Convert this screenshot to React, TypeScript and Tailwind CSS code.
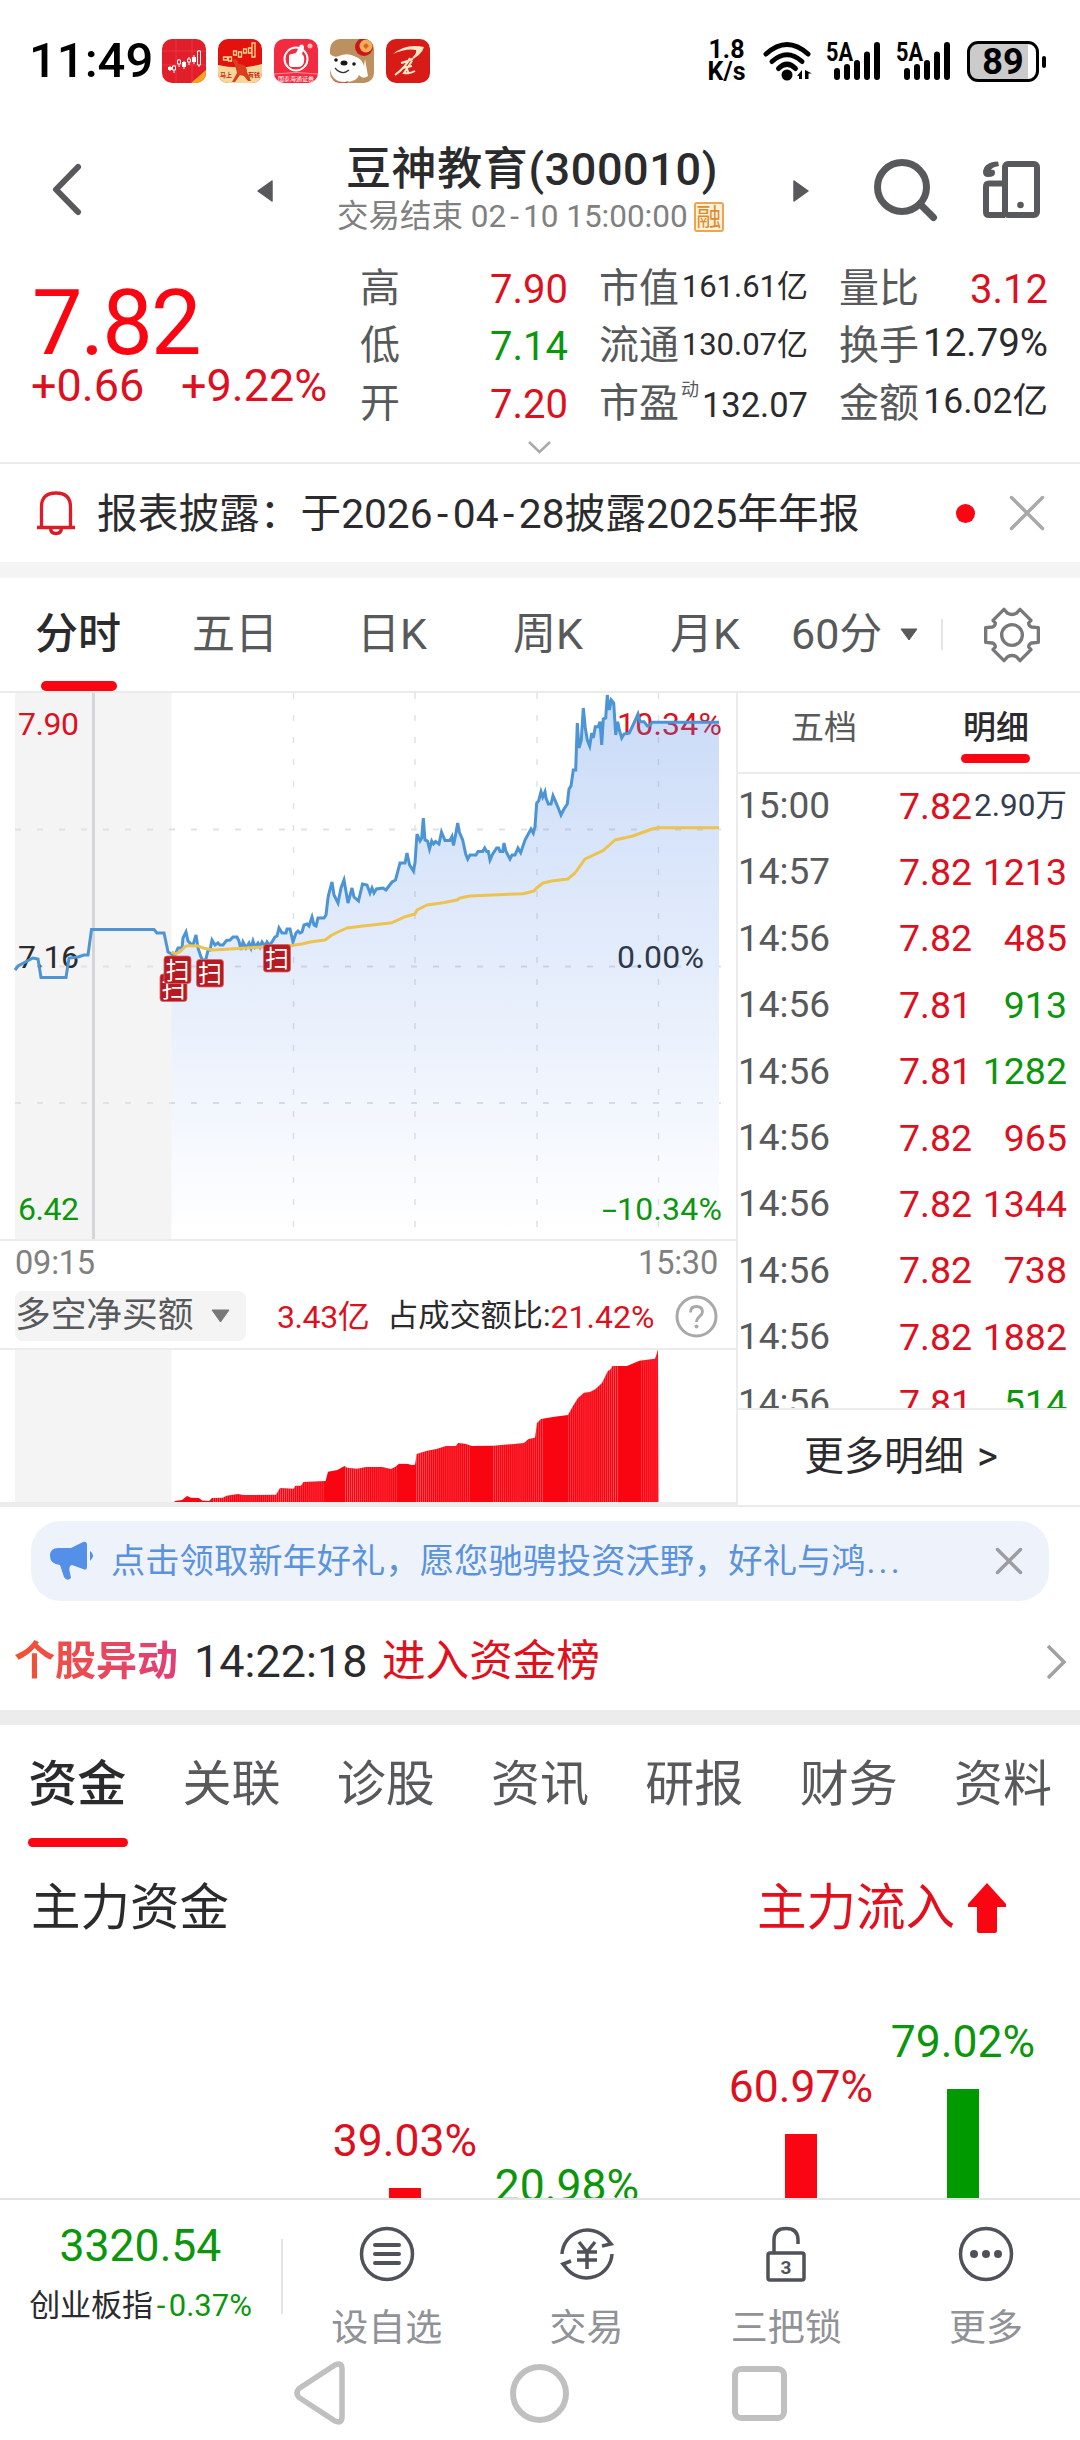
import { useState } from 'react'
import type { ReactNode } from 'react'
import clsx from 'clsx'

const RED = 'text-[#dc101e]'
const GREEN = 'text-[#0c960c]'

const trades = [
  { time: '15:00', price: '7.82', volume: '2.90万', side: 'none' },
  { time: '14:57', price: '7.82', volume: '1213', side: 'buy' },
  { time: '14:56', price: '7.82', volume: '485', side: 'buy' },
  { time: '14:56', price: '7.81', volume: '913', side: 'sell' },
  { time: '14:56', price: '7.81', volume: '1282', side: 'sell' },
  { time: '14:56', price: '7.82', volume: '965', side: 'buy' },
  { time: '14:56', price: '7.82', volume: '1344', side: 'buy' },
  { time: '14:56', price: '7.82', volume: '738', side: 'buy' },
  { time: '14:56', price: '7.82', volume: '1882', side: 'buy' },
  { time: '14:56', price: '7.81', volume: '514', side: 'sell' },
]

const PRE_MARKET = '15,970 18,966 33,958 38,959 41,977.5 66,977.5 69,958 78,957 84,955 88,955 91.5,929.5 154,929.5 157,933 164,933 167,947 168,952 171.5,954'

const PRICE =
  '171.5,954 174,957 178,948 182,948 183,938 186,932 188,941 191,944 193,945 196,935 198,948 201,957 203,961 206,959 208,950 210,950 212,940 215,945 218,943 220,945 223,945 226.5,940.5 230,940 233,937 237,937 239,941 241,950 243,942 246,948 249,943 251,948 253,941 255,947 258,943 260,947 262,942 265,946 267,942 269,945 272,942 275,937 277,936 279,928 282,933 286,933 287,929 290,929 293,942 296,933 298,931 300,933 302,932 304,925 307,924 309,926 312,917 314,925 316,926 318,918 324,918 326,915 328,898 329,893 332,882 334,895 338,903 341,888 344,880 348,903 352,888 354,897 358.5,901 362.5,884 367,885 370,893 372,888 374,893 376.5,889 383,888 386,890 392,882 395.5,880 400,863 405,863 407,853 409.6,865 413.4,871 415,863 417,834 420,841 421.7,838 423.3,818 425,840 427.5,841 429.5,849 431.7,841 433.5,844 435.5,841.5 439,844 441.5,832 445,840.5 450,840.5 452,836.5 453.5,845.5 455.3,836.5 457.7,823 459.3,832 462.7,840 465.7,854 467.7,859 470,855 476,855 478,851.5 482.7,851.5 484.7,848 486.7,851.5 488.3,851.5 490,860 492.7,854 496.7,848 498.7,848 500,851.5 502.7,851.5 504,843 506,851.5 510,859 512,855 515,855 518,848 520.7,852.7 525,840 531,829 533.3,833 535,826.7 536.7,803 538.7,800.7 541,791.7 542.7,797 545,791.7 546,798 548.3,804 551,804 553,795.7 556,802.7 558.3,808 561,815 564,809 567.3,804 569,789 571,786 573.3,770 575.7,770 577.3,723 579,748 581.3,740 583.3,708 585.3,728 587.3,740 589.7,746 591.7,733 593.3,738 595.3,726.7 598.3,726.7 600,721.7 601.7,745 603.3,719 605.7,718 607.3,695 609.3,710 611.3,700 613.7,703 615.7,735 617.7,721.7 619.3,730 621.7,738 624,734 629.3,733 634,723 638,714 640,721.7 644,721.7 647.3,726 650,725 652,722.3 719,722.3'

const AVERAGE =
  '171.7,951.7 175,954 180,951.7 185,946.7 188,945.7 198,946 203,948 213,950 230,949 250,947.7 293,945.3 302,944 310,942 325,940 332,935 338,932 347,928 363,926 392,922.7 398,920 405,916.7 415,914 417,910 427,905 443,902.7 457,900 460,898 470,896 523,893.7 534,891 536.7,888 543,883 551.7,881 567.7,879 575,873 585,859 603,850.7 615,840 633,836 652,829 658,827.7 719,827.7'

const NET_BUY =
  '174.6,1501 182,1500 187,1496 191,1497.7 199,1498 202,1500.5 209,1501 212,1498 223,1497.7 226.5,1495.7 238,1494 243,1495 276,1494.7 280,1488 293.5,1488.7 295.5,1485.7 301,1485.7 303.5,1482 325.6,1481 328,1471.7 337.4,1470 344.5,1466 347,1467.7 357,1468.7 366,1467 382,1467 391,1469 395.5,1466.7 399,1463.7 408,1464 411.5,1465 415,1464.7 416.7,1454 427,1450.7 436.5,1449 446,1446 456,1446 458,1443 465,1443.7 472,1446 493,1445.7 514,1444 524,1443 528.5,1439 535,1437.7 537,1423 541,1419 554.5,1416.7 568,1415 573,1406 578,1398 584,1392.7 590,1392 595.6,1389 602,1383 608,1370.7 610,1370 612.5,1366 627,1366 639.5,1360.7 655,1358.7 657,1353 658,1349 658.5,1502 174.6,1502'

const markers = [
  { x: 160, y: 974 },
  { x: 164, y: 956 },
  { x: 196.5, y: 959.5 },
  { x: 263.5, y: 944.5 },
]

function AppIcons() {
  return (
    <div className="ml-[14px] flex gap-[12px]">
      <svg className="h-[44px] w-[44px] rounded-[10px]" viewBox="0 0 44 44">
        <rect width="44" height="44" fill="#e11f2b" />
        <path d="M0 12H44M0 26H44M14 0V44M30 0V44" stroke="#ee4450" strokeWidth=".6" />
        <path d="M29 44 44 31V44Z" fill="#f5a21d" />
        <path d="M8 27v5M12 26v8M17 20v8M22 22v8M27 18v8M32 16v9M37 11v17" stroke="#fff" strokeWidth="1" />
        <path d="M6 28h4v3H6zM20 23h4v5h-4zM30 18h4v5h-4z" fill="#fff" />
        <path d="M10.500 27h3v4h-3zM15.500 21h3v4h-3zM25.500 20h3v3h-3zM35.500 12h3v14h-3z" fill="#e11f2b" stroke="#fff" strokeWidth="1" />
      </svg>
      <svg className="h-[44px] w-[44px] rounded-[10px]" viewBox="0 0 44 44">
        <rect width="44" height="44" fill="#e3120f" />
        <path d="M0 26Q22 31 44 25V44H0Z" fill="#f6d79a" />
        <path d="M5.500 18h4v3h-4zM10.500 18h3v4h-3zM15.500 12h3v4h-3zM20.500 13h3v5h-3zM25.500 10h3v4h-3zM30.500 9h3v5h-3zM34 4h3v14h-3z" fill="none" stroke="#fbd58a" strokeWidth="1.300" />
        <path d="M14 21 18 20 21 25Q29 25 29 33L33 42H30L26 37 22 36 17 43H14L19 34 17 26Z" fill="#d8401d" />
        <text x="2" y="38" fontSize="6" fontWeight="700" fill="#c3281b">马上</text>
        <text x="30" y="38" fontSize="6" fontWeight="700" fill="#c3281b">有钱</text>
      </svg>
      <svg className="h-[44px] w-[44px] rounded-[10px]" viewBox="0 0 44 44">
        <rect width="44" height="44" fill="#f32b40" />
        <circle cx="22" cy="20" r="11.500" fill="none" stroke="#fff" strokeWidth="2" />
        <path d="M15 17Q15 15 18 15L22 14 26 6Q30 4 30 9L28 15Q31 17 30 23 29 28 24 28H18Q15 28 15 25Z" fill="#fff" />
        <circle cx="36" cy="7" r="2.500" fill="#f9b5bb" />
        <path d="M0 35Q22 32 44 35" fill="none" stroke="#ffb7bd" strokeWidth=".7" />
        <text x="4" y="41.500" fontSize="6" fill="#fff">国泰海通证券</text>
      </svg>
      <svg className="h-[44px] w-[44px] rounded-[10px]" viewBox="0 0 44 44">
        <rect width="44" height="44" fill="#bd915f" />
        <circle cx="34" cy="8" r="9" fill="#c9151b" />
        <circle cx="36" cy="7" r="6.500" fill="#f2ae55" />
        <path d="M36 4 39 7 36 10 33 7Z" fill="#d8642a" />
        <path d="M0 15Q4 19 9 17 18 13 26 18 32 20 34 27L35 20 38 37Q33 41 29 36 27 43 15 43 2 43 0 30Z" fill="#fff" />
        <ellipse cx="14" cy="24" rx="3.500" ry="2.500" fill="#181818" />
        <circle cx="6" cy="21" r="1.800" fill="#181818" />
        <circle cx="24" cy="25" r="1.800" fill="#181818" />
        <path d="M5 29Q12 37 19 31" fill="none" stroke="#333" strokeWidth="1.300" />
        <path d="M3 41Q12 46 18 42L17 44H2Z" fill="#dc2d24" />
      </svg>
      <svg className="h-[44px] w-[44px] rounded-[10px]" viewBox="0 0 44 44">
        <rect width="44" height="44" fill="#d71c18" />
        <path d="M7 15Q20 4 38 8 36 16 23 22 32 14 30 11 20 9 7 15Z" fill="#fde9c8" />
        <path d="M27 20Q20 23 15 24M24 19Q20 28 9 36M26 22 18 34Q24 35 29 32M16 29 26 27M20 28 23 35" fill="none" stroke="#fde9c8" strokeWidth="2" />
      </svg>
    </div>
  )
}

function Signal() {
  return (
    <svg className="h-[40px] w-[58px] overflow-visible" viewBox="0 0 58 40">
      <text x="0" y="22" fontSize="25" fontWeight="700" textLength="27" lengthAdjust="spacingAndGlyphs">5A</text>
      <path d="M11 32V38M21 28V38M31 24V38M41 15.500V38M51 6V38" stroke="#000" strokeWidth="6" strokeLinecap="round" />
    </svg>
  )
}

function StatusBar() {
  return (
    <div className="flex h-[120px] items-start pt-[39px] text-black">
      <span className="ml-[29px] w-[119px] pt-px text-[49px] font-medium leading-[42px]">11:49</span>
      <AppIcons />
      <div className="ml-[277px] flex h-[44px] w-[39px] flex-col items-center text-[25px] font-bold leading-[22px]">
        <span>1.8</span>
        <span>K/s</span>
      </div>
      <svg className="ml-[16px] h-[44px] w-[52px]" viewBox="0 0 52 44">
        <g fill="none" stroke="#000" strokeWidth="5" strokeLinecap="round">
          <path d="M4 15Q25 -4 46 15" />
          <path d="M10 22.500Q25 9 40 22.500" />
          <path d="M16.500 29.500Q25 21 33.500 29.500" />
        </g>
        <circle cx="25" cy="36" r="5.500" />
        <path d="M40 31V40H37V37H35ZM43 40V31L50 34.500H46.500V40Z" />
      </svg>
      <div className="ml-[12px] flex gap-[12px]">
        <Signal />
        <Signal />
      </div>
      <div className="ml-[13px] mt-[2px] flex items-center">
        <div className="flex h-[41px] w-[72px] items-center justify-center rounded-[11px] border-[3px] border-black bg-[linear-gradient(to_right,#cbcbcb_88%,#fff_88%)] text-[36px] font-bold leading-none">
          89
        </div>
        <div className="ml-[3px] h-[12px] w-[4px] rounded-full bg-black" />
      </div>
    </div>
  )
}

function Header() {
  return (
    <div className="flex h-[138px] items-start">
      <svg className="ml-[50px] mt-[42px] h-[54px] w-[34px]" viewBox="0 0 34 54">
        <path d="M28 5 6 27.500 28 50" fill="none" stroke="#58595c" strokeWidth="6" strokeLinecap="round" strokeLinejoin="round" />
      </svg>
      <svg className="ml-[173px] mt-[60px] h-[22px] w-[16px]" viewBox="0 0 16 22">
        <path d="M15 1V21L1 11Z" fill="#58595c" stroke="#58595c" strokeWidth="1.500" strokeLinejoin="round" />
      </svg>
      <div className="ml-[64px] w-[390px] pt-[25px]">
        <div className="whitespace-nowrap pl-[9px] text-[45px] font-medium leading-[50px] tracking-[0.600px] text-[#2b2b2d]">
          豆神教育(300010)
        </div>
        <div className="flex items-center whitespace-nowrap text-[31.500px] leading-[44px] text-[#808080]">
          交易结束 02<span className="px-[4px]">-</span>10 15:00:00
          <span className="ml-[6px] flex h-[30px] w-[30px] items-center justify-center rounded-[3px] border-2 border-[#efa550] bg-[#fff3dc] text-[25px] leading-none text-[#e18a2d]">
            融
          </span>
        </div>
      </div>
      <svg className="ml-[66px] mt-[60px] h-[22px] w-[16px]" viewBox="0 0 16 22">
        <path d="M1 1V21L15 11Z" fill="#58595c" stroke="#58595c" strokeWidth="1.500" strokeLinejoin="round" />
      </svg>
      <svg className="ml-[63px] mt-[36px] h-[66px] w-[68px]" viewBox="0 0 68 66">
        <circle cx="30" cy="31" r="24.500" fill="none" stroke="#58595c" strokeWidth="7" />
        <path d="M48 48 61.500 61.500" stroke="#58595c" strokeWidth="7" strokeLinecap="round" />
      </svg>
      <svg className="ml-[42px] mt-[40px] h-[60px] w-[60px]" viewBox="0 0 60 60">
        <g fill="none" stroke="#58595c" strokeWidth="6">
          <rect x="23" y="4" width="32" height="51" rx="3" />
          <path d="M23 23.500H7Q4 23.500 4 26.500V52Q4 55 7 55H23" />
        </g>
        <circle cx="38.500" cy="45" r="3.300" fill="#58595c" />
        <path d="M16 1.500Q2 2 1 12 1 17 6 17 13 17 13 13 13 9 9 10 10 7 17 6Z" fill="#58595c" />
      </svg>
    </div>
  )
}

interface StatProps {
  label: string
  children: ReactNode
  className?: string
}

function Stat({ label, children, className }: StatProps) {
  return (
    <div className="flex h-[57.500px] items-center justify-between whitespace-nowrap">
      <span className="text-[40px] leading-[57px] text-[#58595b]">{label}</span>
      <span className={clsx('pt-[3px] leading-[54px]', className ?? 'text-[#2b2b2d]')}>{children}</span>
    </div>
  )
}

function Quote() {
  return (
    <div className="relative flex h-[206px] border-b-2 border-[#ececec]">
      <div className="w-[360px] shrink-0 whitespace-nowrap pl-[31px] pt-[21px]">
        <div className="pl-[1px] text-[90px] leading-[90px] tracking-[-2px] text-[#fa0512]">7.82</div>
        <div className={clsx('-mt-[3px] flex text-[45px] leading-[40px]', RED)}>
          <span className="w-[150px]">+0.66</span>
          <span>+9.22%</span>
        </div>
      </div>
      <div className="w-[208px] pt-[1.500px]">
        <Stat label="高" className={clsx('text-[40px]', RED)}>7.90</Stat>
        <Stat label="低" className={clsx('text-[40px]', GREEN)}>7.14</Stat>
        <Stat label="开" className={clsx('text-[40px]', RED)}>7.20</Stat>
      </div>
      <div className="ml-[31px] w-[209px] pt-[1.500px]">
        <Stat label="市值"><span className="text-[31px]">161.61亿</span></Stat>
        <Stat label="流通"><span className="text-[31px]">130.07亿</span></Stat>
        <div className="flex h-[57.500px] items-center whitespace-nowrap">
          <span className="text-[40px] leading-[57px] text-[#58595b]">市盈</span>
          <span className="mb-[26px] ml-[2px] text-[18px] leading-none text-[#58595b]">动</span>
          <span className="ml-auto pt-[3px] text-[34.500px] leading-[54px] text-[#2b2b2d]">132.07</span>
        </div>
      </div>
      <div className="ml-[31px] w-[209px] pt-[1.500px]">
        <Stat label="量比" className={clsx('text-[40px]', RED)}>3.12</Stat>
        <Stat label="换手"><span className="text-[38.500px]">12.79%</span></Stat>
        <Stat label="金额"><span className="text-[35.500px]">16.02亿</span></Stat>
      </div>
      <svg className="absolute left-[527px] top-[182px] h-[14px] w-[25px]" viewBox="0 0 25 14">
        <path d="M2 2 12.500 12 23 2" fill="none" stroke="#aaa" strokeWidth="2.500" />
      </svg>
    </div>
  )
}

function Notice() {
  return (
    <div className="flex h-[98px] items-center">
      <svg className="ml-[36px] h-[46px] w-[40px]" viewBox="0 0 40 46">
        <g fill="none" stroke="#dc1c28" strokeWidth="3.300">
          <path d="M5.500 37V17Q5.500 3 20 3T34.500 17V37" />
          <path d="M1 37.500H39M14.500 38.500Q15 43.500 20 43.500T25.500 38.500" />
        </g>
      </svg>
      <span className="ml-[21px] w-[841px] whitespace-nowrap pt-[2px] text-[40.700px] leading-[60px] text-[#2b2b2d]">
        报表披露：于2026<span className="px-[4.500px]">-</span>04<span className="px-[4.500px]">-</span>28披露2025年年报
      </span>
      <span className="ml-[18px] h-[19px] w-[19px] rounded-full bg-[#fa0512]" />
      <svg className="ml-[34px] h-[36px] w-[36px]" viewBox="0 0 36 36">
        <path d="M2.500 2.500 33.500 33.500M33.500 2.500 2.500 33.500" stroke="#a9a9a9" strokeWidth="3.500" strokeLinecap="round" />
      </svg>
    </div>
  )
}

const periods = [
  { name: '分时', box: 'w-[157px]' },
  { name: '五日', box: 'w-[165px]' },
  { name: '日K', box: 'w-[156px]' },
  { name: '周K', box: 'w-[157px]' },
  { name: '月K', box: 'w-[121px]' },
]

function PeriodTabs() {
  const [active, setActive] = useState('分时')
  return (
    <div className="flex h-[115px] items-center border-b-2 border-[#ebebeb] pl-[35px]">
      {periods.map((p) => (
        <button
          key={p.name}
          onClick={() => setActive(p.name)}
          className={clsx(
            'relative h-full text-left text-[43px]',
            p.box,
            active === p.name ? 'font-medium text-[#2b2b2d]' : 'text-[#58595b]'
          )}
        >
          {p.name}
          {active === p.name && <span className="absolute bottom-0 left-[6px] h-[10px] w-[76px] rounded-[5px] bg-[#fa0512]" />}
        </button>
      ))}
      <span className="w-[109px] text-[43px] text-[#58595b]">60分</span>
      <svg className="h-[13px] w-[18px]" viewBox="0 0 18 13">
        <path d="M1 1H17L9 12Z" fill="#58595b" stroke="#58595b" strokeLinejoin="round" />
      </svg>
      <span className="ml-[23px] h-[31px] w-[2px] bg-[#e5e5e5]" />
      <svg className="ml-[39px] h-[60px] w-[60px]" viewBox="-90 -90 180 180">
        <g fill="none" stroke="#77787a" strokeWidth="10" strokeLinejoin="round">
          <path d="M79-22 58-24Q50-28 50-36L57-44 24-77 13-65Q0-58-13-65L-24-77-57-44-50-36Q-50-28-58-24L-79-22V22L-58 24Q-50 28-50 36L-57 44-24 77-13 65Q0 58 13 65L24 77 57 44 50 36Q50 28 58 24L79 22Z" />
          <circle r="31" />
        </g>
      </svg>
    </div>
  )
}

function PriceChart() {
  return (
    <svg className="block h-[546px] w-[736px]" viewBox="0 693 736 546">
      <defs>
        <linearGradient id="area" x1="0" y1="693" x2="0" y2="1239" gradientUnits="userSpaceOnUse">
          <stop offset="0" stopColor="#4681e4" stopOpacity=".29" />
          <stop offset="1" stopColor="#4681e4" stopOpacity="0" />
        </linearGradient>
      </defs>
      <rect x="15" y="693" width="156.500" height="546" fill="#f4f4f4" />
      <rect x="92" y="693" width="3" height="546" fill="#d5d6d9" />
      <g stroke="#e2e2e2" strokeWidth="2">
        <path d="M15 829.500H721M15 966.500H721M15 1103H721" strokeDasharray="6 16" />
        <path d="M293.500 693V1239M415 693V1239M537 693V1239M658.500 693V1239" strokeWidth="1.500" strokeDasharray="6 16" />
      </g>
      <g fontSize="32" lengthAdjust="spacingAndGlyphs">
        <text x="18" y="734.500" fill="#dc101e" textLength="61">7.90</text>
        <text x="617" y="734.500" fill="#dc101e" textLength="105">10.34%</text>
        <text x="18" y="968" fill="#2b2b2d" textLength="61">7.16</text>
        <text x="617" y="968" fill="#2b2b2d" textLength="87">0.00%</text>
        <text x="18" y="1220" fill="#0c960c" textLength="61">6.42</text>
        <text x="617" y="1220" fill="#0c960c" textLength="105">10.34%</text>
        <text x="602" y="1220" fill="#0c960c" textLength="15" lengthAdjust="spacingAndGlyphs">-</text>
      </g>
      <polygon points={`${PRICE} 719,1239 171.500,1239`} fill="url(#area)" />
      <polyline points={PRE_MARKET} fill="none" stroke="#4f95d3" strokeWidth="3" />
      <polyline points={PRICE} fill="none" stroke="#4b94d6" strokeWidth="3" strokeLinejoin="miter" />
      <polyline points={AVERAGE} fill="none" stroke="#ecc250" strokeWidth="3" strokeLinejoin="round" />
      {markers.map((m) => (
        <g key={m.x}>
          <rect x={m.x} y={m.y} width="27" height="27.500" rx="3" fill="#b81a22" stroke="#d76a6f" strokeWidth=".8" />
          <text x={m.x + 13.5} y={m.y + 22.5} fontSize="24" fill="#fff" textAnchor="middle">扫</text>
        </g>
      ))}
    </svg>
  )
}

function NetBuyChart() {
  return (
    <svg className="block h-[152px] w-[736px]" viewBox="0 1350 736 152">
      <defs>
        <pattern id="bars" width="2.030" height="10" patternUnits="userSpaceOnUse">
          <rect width=".6" height="10" fill="#fff" opacity=".35" />
        </pattern>
        <clipPath id="netbuy">
          <polygon points={NET_BUY} />
        </clipPath>
      </defs>
      <rect x="15" y="1350" width="156.500" height="152" fill="#f4f4f4" />
      <polygon points={NET_BUY} fill="#f90512" />
      <path
        clipPath="url(#netbuy)"
        fill="url(#bars)"
        d="M212 1350H325V1502H212ZM345 1350H397V1502H345ZM416 1350H471V1502H416ZM493 1350H544V1502H493ZM567 1350H619V1502H567ZM641 1350H659V1502H641Z"
      />
    </svg>
  )
}

function ChartPanel() {
  return (
    <div className="w-[738px] border-r-2 border-[#ebebeb]">
      <PriceChart />
      <div className="flex h-[48px] items-center justify-between border-t-2 border-[#ebebeb] pb-[2px] pl-[15px] pr-[18px] text-[32.500px] tracking-[-0.200px] text-[#808080]">
        <span>09:15</span>
        <span>15:30</span>
      </div>
      <div className="flex h-[61px] items-center whitespace-nowrap pl-[15px] text-[32px]">
        <div className="mt-[-3px] flex h-[50px] w-[231px] items-center rounded-[8px] bg-[#f4f4f4] text-[35.700px] text-[#58595b]">
          多空净买额
          <svg className="ml-[18px] h-[14px] w-[19px]" viewBox="0 0 19 14">
            <path d="M1 1H18L9.500 13Z" fill="#77787a" stroke="#77787a" strokeLinejoin="round" />
          </svg>
        </div>
        <span className={clsx('ml-[31px] mt-[-2px] w-[110px] tracking-[-0.400px]', RED)}>3.43亿</span>
        <span className="mt-[-2px] text-[31.200px] text-[#2b2b2d]">占成交额比:</span>
        <span className={clsx('mt-[-2px]', RED)}>21.42%</span>
        <svg className="ml-auto mr-[18px] mt-[-3px] h-[43px] w-[43px]" viewBox="0 0 43 43">
          <circle cx="21.500" cy="21.500" r="19.500" fill="none" stroke="#a9a9a9" strokeWidth="3" />
          <path d="M15.500 17.500Q15.500 11.500 21.500 11.500T27.500 17C27.500 21 21.500 21.500 21.500 27" fill="none" stroke="#a9a9a9" strokeWidth="2.800" />
          <circle cx="21.500" cy="31.500" r="2" fill="#a9a9a9" />
        </svg>
      </div>
      <div className="h-[2px] bg-[#ebebeb]" />
      <NetBuyChart />
      <div className="h-[5px] bg-[#ececec]" />
    </div>
  )
}

function TradePanel() {
  return (
    <div className="flex w-[342px] flex-col border-b-2 border-[#ebebeb]">
      <div className="flex h-[81px] border-b-2 border-[#ebebeb] text-[33px] leading-[70px]">
        <span className="pl-[53px] text-[#58595b]">五档</span>
        <span className="relative ml-auto mr-[51px] font-medium text-[#2b2b2d]">
          明细
          <span className="absolute bottom-[9px] left-[-2px] h-[9px] w-[69px] rounded-full bg-[#fa0512]" />
        </span>
      </div>
      <div className="mr-[13px] h-[636px] overflow-hidden border-b-2 border-[#ebebeb]">
        {trades.map((t, i) => (
          <div key={i} className="flex h-[66.400px] items-center pb-[3px] text-[37.500px]">
            <span className="w-[161px] text-[37px] text-[#58595b]">{t.time}</span>
            <span className={RED}>{t.price}</span>
            <span
              className={clsx(
                'ml-auto',
                t.side === 'buy' && RED,
                t.side === 'sell' && GREEN,
                t.side === 'none' && 'text-[31.500px] text-[#333d4f]'
              )}
            >
              {t.volume}
            </span>
          </div>
        ))}
      </div>
      <button className="flex-1 whitespace-nowrap pb-[2px] pl-[66px] text-left text-[40px] text-[#2b2b2d]">
        更多明细 <span className="pl-[3px]">&gt;</span>
      </button>
    </div>
  )
}

function Banner() {
  return (
    <div className="mx-[31px] mt-[14px] flex h-[80px] items-center rounded-[30px] bg-[#eef3fb]">
      <svg className="ml-[18px] h-[40px] w-[48px]" viewBox="0 0 48 40">
        <path d="M9 7H22L34 1Q38 0 38 4V26Q38 30 34 28L23 24Q19 25 21 32L22 37Q18 41 15 36L11 24Q1 23 1 15T9 7Z" fill="#5590e8" />
        <path d="M41 10Q47 14 41 20Z" fill="#5590e8" />
      </svg>
      <span className="ml-[14px] whitespace-nowrap pt-px text-[34.300px] text-[#5b92dd]">
        点击领取新年好礼，愿您驰骋投资沃野，好礼与鸿<span className="pl-px tracking-[3px]">...</span>
      </span>
      <svg className="ml-auto mr-[26px] h-[28px] w-[28px]" viewBox="0 0 28 28">
        <path d="M2.500 2.500 25.500 25.500M25.500 2.500 2.500 25.500" stroke="#9b9da1" strokeWidth="3.500" strokeLinecap="round" />
      </svg>
    </div>
  )
}

function Unusual() {
  return (
    <div className="flex h-[109px] items-center whitespace-nowrap pt-[13px]">
      <span className="ml-[14px] w-[180px] bg-gradient-to-r from-[#f4522a] to-[#df3a7c] bg-clip-text text-[41px] font-bold text-transparent">
        个股异动
      </span>
      <span className="w-[188px] text-[45px] text-[#2b2b2d]">14:22:18</span>
      <span className="text-[43.600px] text-[#e20f1c]">进入资金榜</span>
      <svg className="ml-auto mr-[13px] h-[36px] w-[22px]" viewBox="0 0 22 36">
        <path d="M3 2 19 18 3 34" fill="none" stroke="#a0a0a0" strokeWidth="3.500" />
      </svg>
    </div>
  )
}

const sections = ['资金', '关联', '诊股', '资讯', '研报', '财务', '资料']

const flows = [
  { label: '39.03%', col: 'ml-[324px] pt-[154px]', tone: RED, bar: 'bg-[#fa0512]' },
  { label: '20.98%', col: 'pt-[199px]', tone: GREEN, bar: 'bg-[#009900]' },
  { label: '60.97%', col: 'ml-[72px] pt-[100px]', tone: RED, bar: 'bg-[#fa0512]' },
  { label: '79.02%', col: 'pt-[55px]', tone: GREEN, bar: 'bg-[#009900]' },
]

function Funds() {
  const [section, setSection] = useState('资金')
  return (
    <div className="flex h-[473px] flex-col overflow-hidden">
      <div className="flex h-[122px] shrink-0">
        {sections.map((s) => (
          <button
            key={s}
            onClick={() => setSection(s)}
            className={clsx(
              'relative w-[154.300px] shrink-0 pb-[3px] text-[49px]',
              section === s ? 'font-medium text-[#2b2b2d]' : 'text-[#58595b]'
            )}
          >
            {s}
            {section === s && <span className="absolute bottom-0 left-[28px] h-[9px] w-[100px] rounded-full bg-[#fa0512]" />}
          </button>
        ))}
      </div>
      <div className="flex h-[122px] shrink-0 items-center pl-[31px] text-[49.500px]">
        <span className="text-[#2b2b2d]">主力资金</span>
        <span className="ml-auto text-[#e20f1c]">主力流入</span>
        <svg className="ml-[11px] mr-[72px] h-[52px] w-[42px]" viewBox="0 0 42 52">
          <path d="M21 1 40 22V25H31V49Q31 51 29 51H13Q11 51 11 49V25H2V22Z" fill="#fa0512" />
        </svg>
      </div>
      <div className="flex h-[229px] shrink-0">
        {flows.map((f) => (
          <div key={f.label} className={clsx('flex w-[162px] flex-col items-center', f.col)}>
            <span className={clsx('text-[44.500px] leading-[36px]', f.tone)}>{f.label}</span>
            <span className={clsx('mt-[29px] w-[32px] flex-1', f.bar)} />
          </div>
        ))}
      </div>
    </div>
  )
}

interface ActionProps {
  label: string
  children: ReactNode
}

function Action({ label, children }: ActionProps) {
  return (
    <button className="flex w-[199.700px] shrink-0 flex-col items-center text-[#919297]">
      <svg className="h-[58px] w-[58px] shrink-0" viewBox="0 0 58 58" fill="none" stroke="#50525a" strokeWidth="3.500">
        {children}
      </svg>
      <span className="mt-[18px] text-[37px] leading-[56px]">{label}</span>
    </button>
  )
}

function BottomBar() {
  return (
    <div className="flex h-[148px] border-t-2 border-[#e3e3e3]">
      <div className="flex w-[281px] shrink-0 flex-col items-center whitespace-nowrap pt-[22px]">
        <span className={clsx('text-[44.500px] leading-[48px]', GREEN)}>3320.54</span>
        <span className="mt-[17px] text-[31px] leading-[38px] text-[#2b2b2d]">
          创业板指<span className={GREEN}><span className="px-[3.500px]">-</span>0.37%</span>
        </span>
      </div>
      <span className="mt-[39px] h-[75px] w-[1.500px] shrink-0 bg-[#e4e4e4]" />
      <div className="ml-[4.500px] flex h-[146px] shrink-0 pt-[25px]">
        <Action label="设自选">
          <circle cx="29" cy="29" r="25.500" />
          <path d="M17 20H41M17 29H41M17 38H41" strokeWidth="4" strokeLinecap="round" />
        </Action>
        <Action label="交易">
          <path d="M4 29A25.500 25.500 0 0 1 48 13L53 19 44 21M54 29A25.500 25.500 0 0 1 10 45L5 39 13 36" />
          <path d="M21 17 29 27 37 17M29 27V44M19 27H39M19 35H39" />
        </Action>
        <Action label="三把锁">
          <rect x="11" y="28" width="36" height="27" rx="2" />
          <path d="M17 28V15Q17 3.500 29 3.500T41 15V19" />
          <text x="29" y="49" fontSize="19" fontWeight="700" textAnchor="middle" fill="#50525a" stroke="none">3</text>
        </Action>
        <Action label="更多">
          <circle cx="29" cy="29" r="25.500" />
          <g fill="#50525a" stroke="none">
            <circle cx="17" cy="29" r="4" />
            <circle cx="29" cy="29" r="4" />
            <circle cx="41" cy="29" r="4" />
          </g>
        </Action>
      </div>
    </div>
  )
}

function SystemNav() {
  return (
    <div className="flex h-[94px] items-center pl-[294px]">
      <svg className="h-[64px] w-[54px]" viewBox="0 0 54 64">
        <path d="M5 27.500 41 4Q48 1 48 8V56Q48 63 41 60L5 36.500Q1 32 5 27.500Z" fill="none" stroke="#c0c0c0" strokeWidth="5.500" />
      </svg>
      <span className="ml-[162px] h-[59px] w-[59px] rounded-full border-[6px] border-[#c0c0c0]" />
      <span className="ml-[163px] h-[55px] w-[55px] rounded-[9px] border-[6px] border-[#c0c0c0]" />
    </div>
  )
}

export default function App() {
  return (
    <div className="h-[2440px] w-[1080px] overflow-hidden bg-white font-[Roboto,'Noto_Sans_CJK_SC',sans-serif]">
      <StatusBar />
      <Header />
      <Quote />
      <Notice />
      <div className="h-[16px] bg-[#f4f4f4]" />
      <PeriodTabs />
      <div className="flex h-[814px]">
        <ChartPanel />
        <TradePanel />
      </div>
      <Banner />
      <Unusual />
      <div className="h-[15px] bg-[#ececec]" />
      <Funds />
      <BottomBar />
      <SystemNav />
    </div>
  )
}
